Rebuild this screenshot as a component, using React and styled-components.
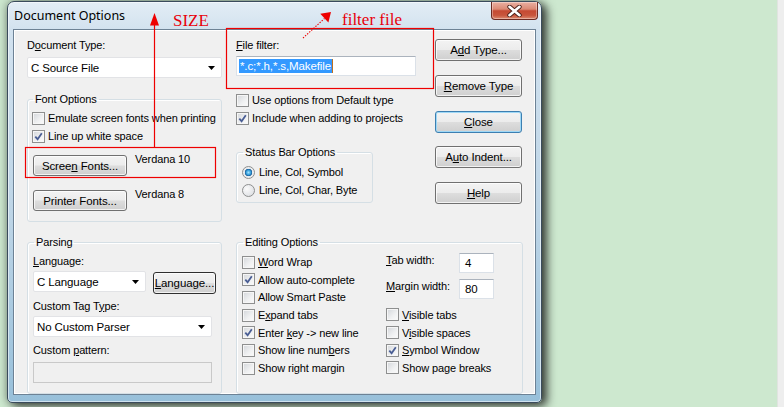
import React from "react";
import styled, { createGlobalStyle } from "styled-components";

const GlobalStyle = createGlobalStyle`
  html, body {
    margin: 0;
    padding: 0;
  }
  body {
    width: 784px;
    height: 407px;
    overflow: hidden;
    background: #cde8cf;
    font-family: "Liberation Sans", Arial, sans-serif;
    font-size: 11px;
    letter-spacing: -0.12px;
    color: #000;
  }
`;

const Page = styled.div`
  position: relative;
  width: 784px;
  height: 407px;
  display: flex;
  align-items: flex-start;
  background: #cde8cf;
`;

const Strip = styled.div`
  margin-left: auto;
  width: 6px;
  height: 407px;
  background: #eeeeee;
  border-left: 1px solid #e0e4e0;
`;

const Window = styled.div`
  margin: 1px 0 0 7px;
  width: 535px;
  height: 402px;
  box-sizing: border-box;
  border: 1px solid #3a4b5c;
  border-radius: 7px 7px 5px 5px;
  background: linear-gradient(to bottom, #e3edf5 0px, #d2e2ef 28px, #bcd4e6 55%, #98c0da 100%);
  box-shadow: 5px 3px 10px rgba(0, 0, 0, 0.7), -1px 0 8px rgba(0, 0, 0, 0.3),
    inset 0 0 0 1px rgba(255, 255, 255, 0.55);
  display: flex;
  flex-direction: column;
  padding: 0 5px 7px 5px;
`;

const TitleBar = styled.div`
  height: 28px;
  display: flex;
  align-items: flex-start;
`;

const Title = styled.span`
  margin: 6px 0 0 1px;
  font: 12.5px/16px "Noto Sans", "Open Sans", sans-serif;
  letter-spacing: 0;
  color: #000;
`;

const CloseBtn = styled.div`
  margin-left: auto;
  margin-right: -2px;
  width: 47px;
  height: 18px;
  box-sizing: border-box;
  border: 1px solid #6b2a22;
  border-top: none;
  border-radius: 0 0 4px 4px;
  background: linear-gradient(to bottom, #eab0a2 0%, #db8a75 42%, #c54a33 52%, #c8553c 78%, #dc8a70 100%);
  box-shadow: inset 0 0 0 1px rgba(255, 255, 255, 0.35);
  display: flex;
  align-items: center;
  justify-content: center;
`;

const Client = styled.div`
  flex: 1;
  background: #f0f0f0;
  border: 1px solid #6d8295;
  box-shadow: inset 0 0 0 1px #ffffff;
  display: grid;
  grid-template-columns: 195px 287px;
  grid-template-rows: auto 1fr;
  column-gap: 14px;
  row-gap: 13.5px;
  padding: 9px 0 0 13px;
  box-sizing: border-box;
`;

const Column = styled.div`
  display: flex;
  flex-direction: column;
  align-items: flex-start;
`;

const TopRight = styled.div`
  display: flex;
  align-items: flex-start;
`;

const MiddleColumn = styled(Column)`
  width: 199px;
`;

const ButtonColumn = styled.div`
  display: flex;
  flex-direction: column;
  gap: 13.75px;
`;

const Label = styled.div`
  line-height: 13px;
  margin-top: ${(p) => p.$mt || 0}px;
  padding-top: ${(p) => p.$pt || 0}px;
  white-space: nowrap;
`;

const Combo = styled.div`
  box-sizing: border-box;
  width: ${(p) => p.$w}px;
  height: 21px;
  margin-top: ${(p) => p.$mt || 0}px;
  background: #fff;
  border: 1px solid #e2e3e6;
  border-radius: 2px;
  display: flex;
  align-items: center;
  padding: 0 6px 0 3px;
  font-size: 11.5px;
`;

const ComboText = styled.span`
  flex: 1;
`;

const TextBox = styled.div`
  box-sizing: border-box;
  width: ${(p) => p.$w}px;
  height: ${(p) => p.$h || 20}px;
  margin-top: ${(p) => p.$mt || 0}px;
  background: ${(p) => (p.$disabled ? "#f0f0f0" : "#fff")};
  border: 1px solid ${(p) => (p.$disabled ? "#c9c9c9" : "#dbe1e8")};
  border-top-color: ${(p) => (p.$disabled ? "#c9c9c9" : "#abb3bd")};
  display: flex;
  align-items: center;
  padding-left: 2px;
  font-size: 11.5px;
`;

const Selected = styled.span`
  background: #3399ff;
  color: #fff;
  padding: 1px 1px;
  border-right: 1px solid #c0701f;
`;

const Button = styled.div`
  box-sizing: border-box;
  width: ${(p) => p.$w}px;
  height: ${(p) => p.$h || 22}px;
  margin-top: ${(p) => p.$mt || 0}px;
  border: 1px solid ${(p) => (p.$default ? "#3c7fb1" : p.$focus ? "#2f2f2f" : "#707070")};
  border-radius: 3px;
  background: linear-gradient(to bottom, #f3f3f3 0%, #ececec 48%, #dddddd 52%, #cfcfcf 100%);
  box-shadow: inset 0 0 0 1px ${(p) => (p.$default ? "#9fd8f6" : "rgba(255,255,255,0.75)")};
  display: flex;
  align-items: center;
  justify-content: center;
  flex-shrink: 0;
  font-size: 11.5px;
  white-space: nowrap;
`;

const Group = styled.fieldset`
  margin: ${(p) => p.$mt || 0}px 0 0 0;
  min-width: 0;
  box-sizing: border-box;
  width: ${(p) => (p.$w ? `${p.$w}px` : "auto")};
  border: 1px solid #d5dfe5;
  border-radius: 3px;
  box-shadow: inset 1px 1px 0 #fff;
  padding: ${(p) => p.$pad};
`;

const Legend = styled.legend`
  padding: 0 2px;
  margin-left: 1px;
  line-height: 13px;
`;

const CheckRow = styled.div`
  height: ${(p) => p.$h || 18}px;
  display: flex;
  align-items: center;
  gap: 3px;
  white-space: nowrap;
`;

const Box = styled.span`
  box-sizing: border-box;
  width: 13px;
  height: 13px;
  flex-shrink: 0;
  border: 1px solid #8e8f8f;
  background: linear-gradient(135deg, #d3d6da 0%, #f0f1f2 60%, #fbfbfb 100%);
  box-shadow: inset 0 0 0 1px #f6f6f6;
  display: flex;
  align-items: center;
  justify-content: center;
`;

const Radio = styled(Box)`
  border-radius: 50%;
  background: ${(p) =>
    p.$on
      ? "radial-gradient(circle at 50% 50%, #9fe0ff 0%, #3aa2dc 28%, #155c9a 45%, #e6e9ec 50%, #f4f4f4 100%)"
      : "radial-gradient(circle at 35% 35%, #fafafa 0%, #e2e4e7 70%, #d0d3d7 100%)"};
  box-shadow: none;
`;

const ButtonRow = styled.div`
  display: flex;
  align-items: flex-start;
  gap: ${(p) => p.$gap || 0}px;
  margin-top: ${(p) => p.$mt || 0}px;
`;

const EditGrid = styled.div`
  display: grid;
  grid-template-columns: 144px 1fr;
  grid-template-rows: repeat(7, 17.7px);
  grid-auto-flow: column;
`;

const WidthBlock = styled.div`
  grid-column: 2;
  grid-row: 1 / span 3;
  display: flex;
  flex-direction: column;
  gap: 6px;
`;

const WidthRow = styled.div`
  display: grid;
  grid-template-columns: 73px 35px;
  align-items: start;
`;

const RightChecks = styled.div`
  grid-column: 2;
  grid-row: 4 / span 4;
  display: flex;
  flex-direction: column;
`;

const Overlay = styled.svg`
  position: absolute;
  left: 0;
  top: 0;
  pointer-events: none;
`;

const Note = styled.span`
  position: absolute;
  left: ${(p) => p.$x}px;
  top: ${(p) => p.$y}px;
  font: 17px/17px "Liberation Serif", "Times New Roman", serif;
  letter-spacing: 0;
  color: #e8000b;
  white-space: nowrap;
`;

const Arrow = () => (
  <svg width="7" height="4" viewBox="0 0 7 4">
    <path d="M0 0 H7 L3.5 4 Z" fill="#000" />
  </svg>
);

const Check = ({ checked, children }) => (
  <CheckRow>
    <Box>
      {checked && (
        <svg width="9" height="9" viewBox="0 0 9 9">
          <path d="M1.3 4.6 L3.6 7.2 L7.8 1.2" fill="none" stroke="#4a5e94" strokeWidth="1.8" />
        </svg>
      )}
    </Box>
    <span>{children}</span>
  </CheckRow>
);

const Option = ({ on, children }) => (
  <CheckRow>
    <Radio $on={on} />
    <span style={{ marginLeft: 1 }}>{children}</span>
  </CheckRow>
);

const App = () => {
  return (
    <>
      <GlobalStyle />
      <Page>
        <Window>
          <TitleBar>
            <Title>Document Options</Title>
            <CloseBtn>
              <svg width="15" height="12" viewBox="0 0 15 12">
                <path d="M2.5 1.8 L12.5 10.2 M12.5 1.8 L2.5 10.2" stroke="#4a2018" strokeWidth="4.4" strokeLinecap="round" />
                <path d="M2.5 1.8 L12.5 10.2 M12.5 1.8 L2.5 10.2" stroke="#ffffff" strokeWidth="2.6" strokeLinecap="round" />
              </svg>
            </CloseBtn>
          </TitleBar>
          <Client>
            <Column>
              <Label>
                D<u>o</u>cument Type:
              </Label>
              <Combo $w={195} $mt={5}>
                <ComboText>C Source File</ComboText>
                <Arrow />
              </Combo>
              <Group $w={195} $mt={14.5} $pad="3.5px 4px 10px 4px">
                <Legend>Font Options</Legend>
                <Check>Emulate screen fonts when printing</Check>
                <Check checked>Line up white space</Check>
                <ButtonRow $mt={10} $gap={8}>
                  <Button $w={94} $h={21} style={{ marginLeft: 1 }}>
                    Scree<u>n</u>&nbsp;Fonts...
                  </Button>
                  <Label $mt={-2}>Verdana 10</Label>
                </ButtonRow>
                <ButtonRow $mt={14} $gap={8}>
                  <Button $w={94} $h={21} style={{ marginLeft: 1 }}>
                    Printer Fonts...
                  </Button>
                  <Label $mt={-2}>Verdana 8</Label>
                </ButtonRow>
              </Group>
            </Column>

            <TopRight>
              <MiddleColumn>
                <Label>
                  <u>F</u>ile filter:
                </Label>
                <TextBox $w={180} $mt={4}>
                  <Selected>*.c;*.h,*.s,Makefile</Selected>
                </TextBox>
                <div style={{ marginTop: 15 }}>
                  <Check>Use options from Default type</Check>
                  <Check checked>Include when adding to projects</Check>
                </div>
                <Group $w={137} $mt={18.5} $pad="4.5px 5px 3px 5px">
                  <Legend>Status Bar Options</Legend>
                  <Option on>Line, Col, Symbol</Option>
                  <Option>Line, Col, Char, Byte</Option>
                </Group>
              </MiddleColumn>
              <ButtonColumn>
                <Button $w={87}>
                  A<u>d</u>d Type...
                </Button>
                <Button $w={87}>
                  <u>R</u>emove Type
                </Button>
                <Button $w={87} $default>
                  <u>C</u>lose
                </Button>
                <Button $w={87}>
                  A<u>u</u>to Indent...
                </Button>
                <Button $w={87}>
                  <u>H</u>elp
                </Button>
              </ButtonColumn>
            </TopRight>

            <Group $w={195} $pad="6px 5px 10px 5px">
              <Legend>Parsing</Legend>
              <Label>
                <u>L</u>anguage:
              </Label>
              <ButtonRow $mt={3.5} $gap={7}>
                <Combo $w={113}>
                  <ComboText>C Language</ComboText>
                  <Arrow />
                </Combo>
                <Button $w={63} $mt={1} $focus>
                  <u>L</u>anguage...
                </Button>
              </ButtonRow>
              <Label $mt={5.5}>
                Custom Tag T<u>y</u>pe:
              </Label>
              <Combo $w={179} $mt={3.5}>
                <ComboText>No Custom Parser</ComboText>
                <Arrow />
              </Combo>
              <Label $mt={7}>
                Custom <u>p</u>attern:
              </Label>
              <TextBox $w={179} $h={21} $mt={5} $disabled />
            </Group>

            <Group $w={287} $pad="4.5px 5px 8px 5px">
              <Legend>Editing Options</Legend>
              <EditGrid>
                <Check>
                  <u>W</u>ord Wrap
                </Check>
                <Check checked>Allow auto-complete</Check>
                <Check>Allow Smart Paste</Check>
                <Check>
                  E<u>x</u>pand tabs
                </Check>
                <Check checked>
                  Enter <u>k</u>ey -&gt; new line
                </Check>
                <Check>
                  Show line num<u>b</u>ers
                </Check>
                <Check>Show right margin</Check>
                <WidthBlock>
                  <WidthRow>
                    <Label $pt={1}>
                      <u>T</u>ab width:
                    </Label>
                    <TextBox $w={35}>&nbsp;4</TextBox>
                  </WidthRow>
                  <WidthRow>
                    <Label $pt={1}>
                      <u>M</u>argin width:
                    </Label>
                    <TextBox $w={35}>&nbsp;80</TextBox>
                  </WidthRow>
                </WidthBlock>
                <RightChecks>
                  <Check>
                    <u>V</u>isible tabs
                  </Check>
                  <Check>
                    V<u>i</u>sible spaces
                  </Check>
                  <Check checked>
                    <u>S</u>ymbol Window
                  </Check>
                  <Check>Show page breaks</Check>
                </RightChecks>
              </EditGrid>
            </Group>
          </Client>
        </Window>
        <Strip />

        <Overlay width="784" height="407" viewBox="0 0 784 407">
          <rect x="226.5" y="28.5" width="207" height="60" fill="none" stroke="#ee0000" strokeWidth="1.2" />
          <rect x="25.5" y="147.5" width="190" height="30" fill="none" stroke="#ee0000" strokeWidth="1.2" />
          <line x1="154.5" y1="24" x2="154.5" y2="147.5" stroke="#ee0000" strokeWidth="1.2" />
          <polygon points="154.5,13 150,25.5 159,25.5" fill="#ee0000" />
          <line x1="303" y1="38" x2="324.5" y2="18.5" stroke="#ee0000" strokeWidth="1.1" strokeDasharray="1.4 1.4" />
          <polygon points="331,12 328.4,22.4 320.3,13.7" fill="#ee0000" />
        </Overlay>
        <Note $x={173} $y={11.5}>SIZE</Note>
        <Note $x={342} $y={10.5}>filter file</Note>
      </Page>
    </>
  );
};

export default App;
